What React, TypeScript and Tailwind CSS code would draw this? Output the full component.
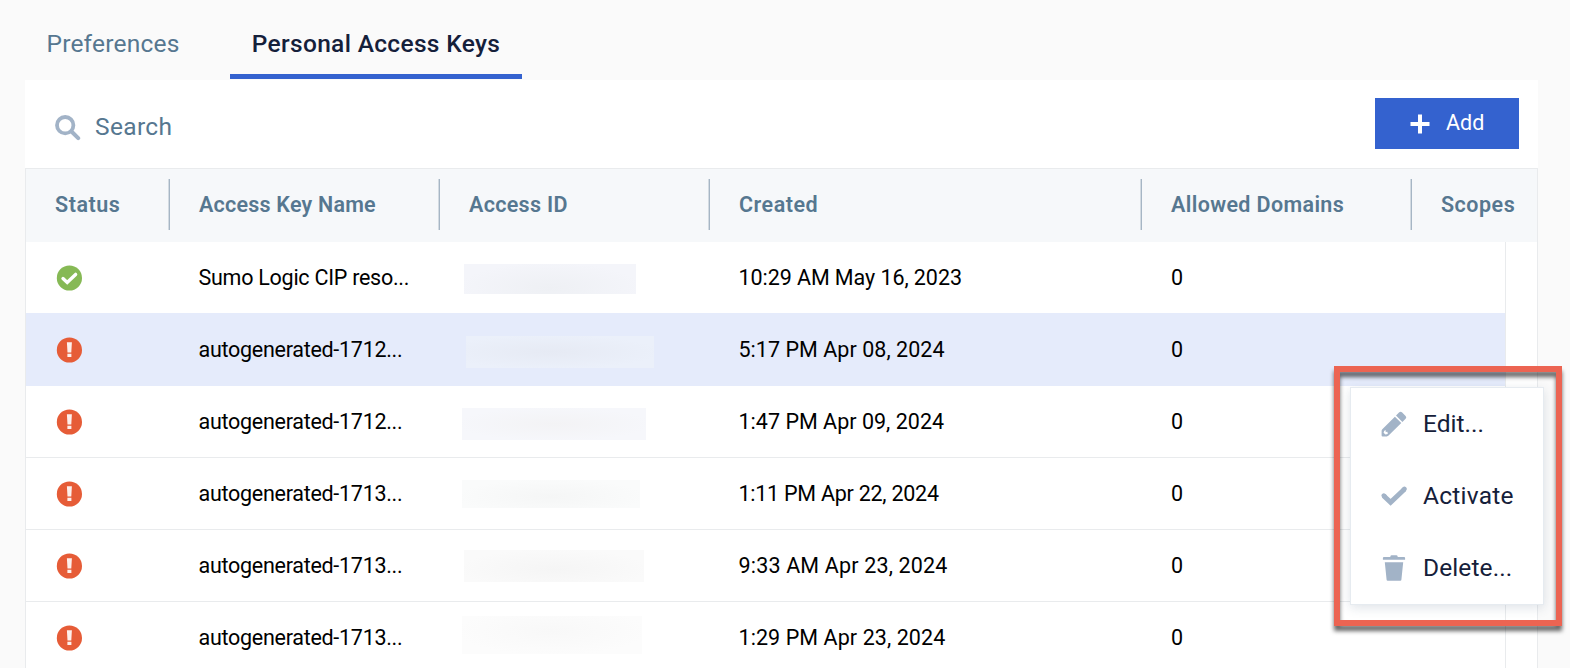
import React from "react";

type Row = {
  ok?: boolean;
  selected?: boolean;
  name: string;
  nameClass: string;
  created: string;
  createdClass: string;
  mask: string;
};

const rows: Row[] = [
  {
    ok: true,
    name: "Sumo Logic CIP reso...",
    nameClass: "tracking-[-0.26px]",
    created: "10:29 AM May 16, 2023",
    createdClass: "tracking-[-0.07px]",
    mask: "ml-[-5px] mt-[22px] h-[30px] w-[172px] bg-[radial-gradient(ellipse_at_50%_80%,#eef0f4,#f4f5fa_75%)]",
  },
  {
    selected: true,
    name: "autogenerated-1712...",
    nameClass: "tracking-[-0.28px]",
    created: "5:17 PM Apr 08, 2024",
    createdClass: "tracking-[0.04px]",
    mask: "ml-[-3px] mt-[22px] h-[32px] w-[188px] bg-[radial-gradient(ellipse_at_45%_50%,#e6eaf4,#ebf0fa_75%)]",
  },
  {
    name: "autogenerated-1712...",
    nameClass: "tracking-[-0.28px]",
    created: "1:47 PM Apr 09, 2024",
    createdClass: "tracking-[0.02px]",
    mask: "ml-[-7px] mt-[22px] h-[32px] w-[184px] bg-[radial-gradient(ellipse_at_50%_50%,#f3f3f5,#f6f7fb_75%)]",
  },
  {
    name: "autogenerated-1713...",
    nameClass: "tracking-[-0.28px]",
    created: "1:11 PM Apr 22, 2024",
    createdClass: "tracking-[-0.25px]",
    mask: "ml-[-7px] mt-[22px] h-[28px] w-[178px] bg-[radial-gradient(ellipse_at_50%_60%,#f5f6f6,#fafbfb_75%)]",
  },
  {
    name: "autogenerated-1713...",
    nameClass: "tracking-[-0.28px]",
    created: "9:33 AM Apr 23, 2024",
    createdClass: "tracking-[0.17px]",
    mask: "ml-[-5px] mt-[20px] h-[32px] w-[180px] bg-[radial-gradient(ellipse_at_50%_60%,#f5f5f5,#fafafa_75%)]",
  },
  {
    name: "autogenerated-1713...",
    nameClass: "tracking-[-0.28px]",
    created: "1:29 PM Apr 23, 2024",
    createdClass: "tracking-[0.08px]",
    mask: "ml-[-7px] mt-[14px] h-[38px] w-[180px] bg-[radial-gradient(ellipse_at_50%_40%,#f8f8f8,#fcfcfc_75%)]",
  },
];

const GRID = "grid grid-cols-[144px_270px_270px_432px_270px_1fr]";

const headers = [
  { label: "Status", cls: "tracking-[0.55px]" },
  { label: "Access Key Name", cls: "tracking-[0.22px]" },
  { label: "Access ID", cls: "tracking-[0.3px]" },
  { label: "Created", cls: "tracking-[0.5px]" },
  { label: "Allowed Domains", cls: "tracking-[0.37px]" },
  { label: "Scopes", cls: "tracking-[0.5px]" },
];

function SearchIcon() {
  return (
    <svg width="26" height="26" viewBox="0 0 26 26" fill="none" stroke="#a2b3c7" strokeLinecap="round">
      <circle cx="10.2" cy="10.2" r="8.2" strokeWidth="3.8" />
      <path d="M16.5 16.5L23.2 23.2" strokeWidth="4" />
    </svg>
  );
}

function StatusIcon({ ok }: { ok?: boolean }) {
  return (
    <svg width="27" height="26" viewBox="-0.4 0 27 26">
      <circle cx="13" cy="13" r="12.6" fill={ok ? "#86b955" : "#e65c37"} />
      {ok ? (
        <path d="M6.6 13.6L10.8 17.4L19.2 9.4" fill="none" stroke="#fff" strokeWidth="3.4" strokeLinecap="round" />
      ) : (
        <path d="M10.5 5.2h5l-.6 10.3h-3.8zM11 16.8h4v3.2h-4z" fill="#fff" fillOpacity="0.9" />
      )}
    </svg>
  );
}

function PencilIcon() {
  return (
    <svg width="26" height="26" viewBox="0 0 26 26" fill="#a2b3c7">
      <path d="M18 1.6q1.6-1.6 3.2 0l3.4 3.4q1.4 1.4 0 2.8L21.4 11L15 4.6z" />
      <path
        fillRule="evenodd"
        d="M13.9 5.7L20.3 12.1L7.6 24.6Q6.8 25.4 5.8 25.4H1.6Q.6 25.4 .6 24.4V20Q.6 19 1.3 18.3zM3.2 19.8L2.6 21.8L4.4 23.6L6.8 22.9L6.4 20.8L4.6 20.9L4.9 19.2z"
      />
    </svg>
  );
}

function CheckIcon() {
  return (
    <svg width="26" height="26" viewBox="0 0 26 26" fill="none" stroke="#a2b3c7" strokeWidth="4.6">
      <path d="M2.6 12.8L9.6 19.4L23.4 6.2" strokeWidth="5" />
      <path d="M2.8 12.6L3.4 13.2M22.8 6.6L23.4 6" strokeLinecap="round" />
    </svg>
  );
}

function TrashIcon() {
  return (
    <svg width="26" height="26" viewBox="0 0 26 26" fill="#a2b3c7">
      <path d="M9.4 1.2Q9.6 .2 10.6 .2h4.8q1 0 1.2 1l.1.7h6.4q1 0 1 1v1.8H1.9V2.9q0-1 1-1h6.4z" />
      <path d="M3.8 7.2h18.4l-1.8 17.6q-.1 1-1.1 1H6.7q-1 0-1.1-1z" />
    </svg>
  );
}

const menu = [
  { label: "Edit...", icon: <PencilIcon />, cls: "tracking-[0px]" },
  { label: "Activate", icon: <CheckIcon />, cls: "tracking-[0.25px]" },
  { label: "Delete...", icon: <TrashIcon />, cls: "tracking-[0.1px]" },
];

export default function App() {
  return (
    <div className="relative h-[668px] w-[1570px] overflow-hidden bg-[#fafafa] font-['Roboto',sans-serif]">
      <nav className="flex h-[80px] pl-[26px] text-[24.5px]">
        <div className="flex h-[79px] w-[204px] items-center pl-[20.5px] pt-[9px] leading-none text-[#567790] tracking-[0.2px]">
          Preferences
        </div>
        <div className="flex h-[79px] w-[292px] items-center justify-center border-b-[5px] border-[#3462cf] pt-[14px] font-medium leading-none text-[#15203a] tracking-[0.33px]">
          Personal Access Keys
        </div>
      </nav>

      <main className="ml-[25px] w-[1513px] bg-white">
        <div className="flex h-[88px] items-start pl-[30px] pr-[19px]">
          <div className="flex h-[88px] flex-1 items-center gap-[14px] pt-[7px] text-[24.5px] leading-none text-[#567790] tracking-[0.35px]">
            <SearchIcon />
            <span>Search</span>
          </div>
          <button className="mt-[18px] flex h-[51px] w-[144px] items-center bg-[#3462cf] pl-[35px] text-[21.5px] leading-none text-white">
            <svg width="20" height="20" viewBox="0 0 20 20" fill="none" stroke="#fff" strokeWidth="4">
              <path d="M10 .5v19M.5 10h19" />
            </svg>
            <span className="ml-[16px] pb-[2px]">Add</span>
          </button>
        </div>

        <div className="h-[500px] border border-b-0 border-[#e9ebed]">
          <div className={`${GRID} h-[73px] bg-[#f6f8fa]`}>
            {headers.map((h, i) => (
              <div key={h.label} className="flex items-start pt-[10px]">
                <div
                  className={`flex h-[51px] flex-1 items-center whitespace-nowrap pl-[29px] text-[21.5px] font-semibold leading-none text-[#567790] ${
                    i < 5 ? "border-r border-[#a6b6c5] shadow-[inset_-1px_0_0_#d3dbe2]" : ""
                  } ${h.cls}`}
                >
                  {h.label}
                </div>
              </div>
            ))}
          </div>
          <div className="w-[1480px] border-r border-[#e9ebed] bg-white">
            {rows.map((r, i) => (
              <div
                key={i}
                className={`${GRID} h-[72px] border-b text-[21.5px] leading-none text-black ${
                  r.selected ? "border-[#e5ebfb] bg-[#e5ebfb]" : r.ok ? "border-[#e5ebfb]" : "border-[#e9ebed]"
                }`}
              >
                <div className="flex items-center pl-[30px] pt-px">
                  <StatusIcon ok={r.ok} />
                </div>
                <div className={`flex items-center whitespace-nowrap pl-[28.5px] ${r.nameClass}`}>{r.name}</div>
                <div className="flex items-start pl-[29px]">
                  <div className={r.mask} />
                </div>
                <div className={`flex items-center whitespace-nowrap pl-[28.5px] ${r.createdClass}`}>{r.created}</div>
                <div className="flex items-center pl-[29px]">0</div>
                <div />
              </div>
            ))}
          </div>
        </div>
      </main>

      <div className="absolute left-[1350px] top-[387px] w-[194px] border border-[#e6ebf0] bg-white shadow-[0_3px_10px_rgba(60,90,120,0.16)]">
        {menu.map((m) => (
          <div key={m.label} className="flex h-[72px] items-center gap-[16px] pl-[30px] text-[24.5px] leading-none text-[#15203a]">
            {m.icon}
            <span className={m.cls}>{m.label}</span>
          </div>
        ))}
      </div>
      <div className="absolute left-[1334px] top-[366px] h-[260px] w-[228px] border-[6px] border-[#ec6452] drop-shadow-[0_5px_2px_rgba(0,0,0,0.6)]" />
    </div>
  );
}
